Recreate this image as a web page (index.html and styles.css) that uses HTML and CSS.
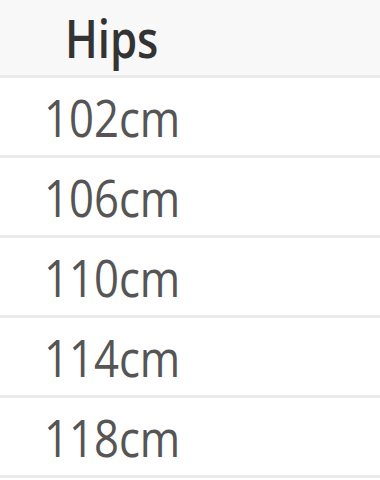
FILE: index.html
```html
<!DOCTYPE html>
<html lang="en">
<head>
    <meta charset="UTF-8">
    <title>Size Chart</title>
    <link rel="stylesheet" href="styles.css">
</head>
<body>
    <div class="size-table">
        <div class="row header-row"><div class="cell"><span class="label">Hips</span></div></div>
        <div class="row"><div class="cell"><span class="label">102cm</span></div></div>
        <div class="row"><div class="cell"><span class="label">106cm</span></div></div>
        <div class="row"><div class="cell"><span class="label">110cm</span></div></div>
        <div class="row"><div class="cell"><span class="label">114cm</span></div></div>
        <div class="row"><div class="cell"><span class="label">118cm</span></div></div>
    </div>
</body>
</html>
```

FILE: styles.css
```css
html, body {
    margin: 0;
    background-color: #ffffff;
    font-family: "Open Sans", "Noto Sans", sans-serif;
    overflow: hidden;
}
.size-table {
    display: flex;
    flex-direction: column;
}
.row {
    height: 77px;
    border-bottom: 3px solid #ebebeb;
    display: flex;
    align-items: center;
}
.header-row {
    height: 75px;
    background-color: #f8f8f8;
}
.cell {
    width: 224px;
    display: flex;
    justify-content: center;
}
.label {
    display: inline-block;
    font-size: 52px;
    line-height: 1;
    color: #555555;
    transform: scaleX(0.84);
}
.header-row .label {
    color: #333333;
    font-weight: 600;
}
```
